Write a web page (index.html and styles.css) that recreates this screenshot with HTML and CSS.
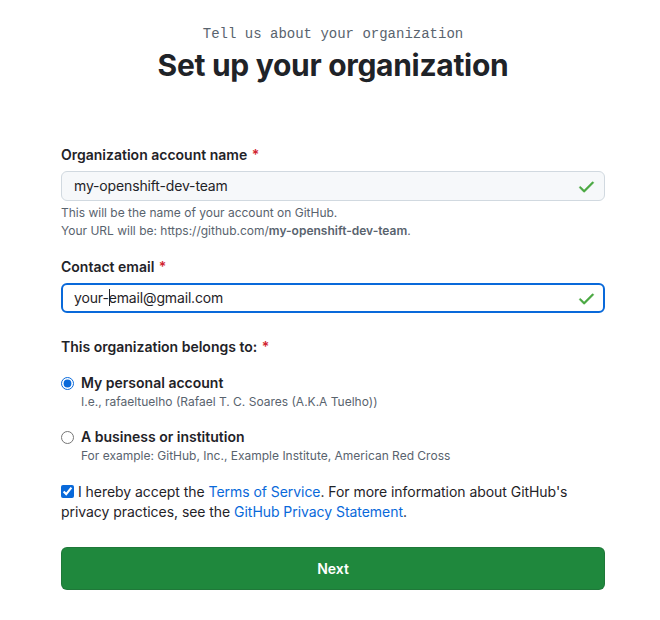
FILE: index.html
```html
<!DOCTYPE html>
<html lang="en">
<head>
<meta charset="utf-8">
<title>Set up your organization</title>
<link rel="stylesheet" href="styles.css">
</head>
<body>
<main class="page">
  <p class="eyebrow">Tell us about your organization</p>
  <h1 class="title">Set up your organization</h1>

  <form class="form">
    <div class="field">
      <label class="label">Organization account name <span class="req">*</span></label>
      <div class="input">
        <span class="value">my-openshift-dev-team</span>
        <svg class="check" viewBox="0 0 16 16" width="19" height="19" aria-hidden="true"><path d="M13.78 4.22a.75.75 0 0 1 0 1.06l-7.25 7.25a.75.75 0 0 1-1.06 0L2.22 9.28a.751.751 0 0 1 .018-1.042.751.751 0 0 1 1.042-.018L6 10.94l6.72-6.72a.75.75 0 0 1 1.06 0Z"/></svg>
      </div>
      <p class="note">This will be the name of your account on GitHub.<br>Your URL will be: https://github.com/<strong>my-openshift-dev-team</strong>.</p>
    </div>

    <div class="field field-email">
      <label class="label">Contact email <span class="req">*</span></label>
      <div class="input input-focus">
        <span class="value">your-<span class="caret"></span>email@gmail.com</span>
        <svg class="check" viewBox="0 0 16 16" width="19" height="19" aria-hidden="true"><path d="M13.78 4.22a.75.75 0 0 1 0 1.06l-7.25 7.25a.75.75 0 0 1-1.06 0L2.22 9.28a.751.751 0 0 1 .018-1.042.751.751 0 0 1 1.042-.018L6 10.94l6.72-6.72a.75.75 0 0 1 1.06 0Z"/></svg>
      </div>
    </div>

    <div class="field field-owner">
      <p class="label">This organization belongs to: <span class="req">*</span></p>
      <label class="option">
        <input type="radio" name="owner" class="radio" checked>
        <span class="option-body">
          <span class="option-title">My personal account</span>
          <span class="option-note">I.e., rafaeltuelho (Rafael T. C. Soares (A.K.A Tuelho))</span>
        </span>
      </label>
      <label class="option">
        <input type="radio" name="owner" class="radio">
        <span class="option-body">
          <span class="option-title">A business or institution</span>
          <span class="option-note">For example: GitHub, Inc., Example Institute, American Red Cross</span>
        </span>
      </label>
    </div>

    <p class="terms"><input type="checkbox" class="checkbox" checked>I hereby accept the <a href="#" class="link">Terms of Service</a>. For more information about GitHub's privacy practices, see the <a href="#" class="link">GitHub Privacy Statement</a>.</p>

    <button type="button" class="btn">Next</button>
  </form>
</main>
</body>
</html>
```

FILE: styles.css
```css
* { box-sizing: border-box; }

html, body { margin: 0; padding: 0; background: #ffffff; }

body {
  font-family: Inter, "Liberation Sans", Arial, sans-serif;
  color: #1f2328;
  font-size: 14px;
}

.page {
  width: 544px;
  margin-left: 61px;
  padding-top: 24px;
}

.eyebrow {
  margin: 0;
  text-align: center;
  font-family: "Liberation Mono", "DejaVu Sans Mono", monospace;
  font-size: 14px;
  line-height: 20px;
  color: #59636e;
}

.title {
  margin: 1px 0 0;
  text-align: center;
  font-size: 30px;
  line-height: 40px;
  font-weight: 700;
  letter-spacing: -0.3px;
  color: #1f2328;
}

.form {
  margin-top: 60px;
  display: flex;
  flex-direction: column;
}

.label {
  display: block;
  margin: 0;
  font-size: 14px;
  line-height: 20px;
  font-weight: 600;
  color: #1f2328;
}

.req { color: #d1242f; margin-left: 1px; }

.input {
  margin-top: 6px;
  height: 30px;
  display: flex;
  align-items: center;
  justify-content: space-between;
  padding: 0 8px 0 12px;
  background: #f6f8fa;
  border: 1px solid #d1d9e0;
  border-radius: 6px;
  font-size: 14px;
  color: #1f2328;
}

.input-focus {
  background: #ffffff;
  border: 2px solid #0969da;
  padding-left: 11px;
  padding-right: 7px;
}

.value { line-height: 20px; white-space: nowrap; letter-spacing: -0.15px; }

.caret {
  display: inline-block;
  width: 1px;
  height: 17px;
  margin-right: -1px;
  background: #1f2328;
  vertical-align: -3px;
}

.check { fill: #4aa842; stroke: #4aa842; stroke-width: 0.4; flex: none; }

.note {
  margin: 3px 0 0;
  font-size: 12px;
  line-height: 18px;
  color: #59636e;
}

.note strong { color: #59636e; font-weight: 600; }

.field-email { margin-top: 17px; }

.field-owner { margin-top: 24px; }

.option {
  margin-top: 16px;
  display: flex;
  align-items: flex-start;
  gap: 7px;
  cursor: pointer;
}

.radio {
  margin: 4px 0 0 0;
  width: 13px;
  height: 13px;
  accent-color: #0969da;
  flex: none;
}

.option-body { display: flex; flex-direction: column; }

.option-title {
  font-size: 14px;
  line-height: 20px;
  font-weight: 600;
  color: #1f2328;
}

.option-note {
  font-size: 12px;
  line-height: 18px;
  color: #59636e;
}

.terms {
  margin: 17px 0 0;
  font-size: 14px;
  line-height: 20px;
  color: #1f2328;
  letter-spacing: -0.05px;
}

.checkbox {
  margin: 0 4px 0 0;
  width: 13px;
  height: 13px;
  vertical-align: -1px;
  accent-color: #0969da;
}

.link { color: #0969da; text-decoration: none; }

.btn {
  margin-top: 25px;
  height: 43px;
  width: 100%;
  border: 1px solid rgba(31, 35, 40, 0.15);
  border-radius: 6px;
  background: #1f883d;
  color: #ffffff;
  font-family: inherit;
  font-size: 14px;
  font-weight: 600;
  cursor: pointer;
}
```
